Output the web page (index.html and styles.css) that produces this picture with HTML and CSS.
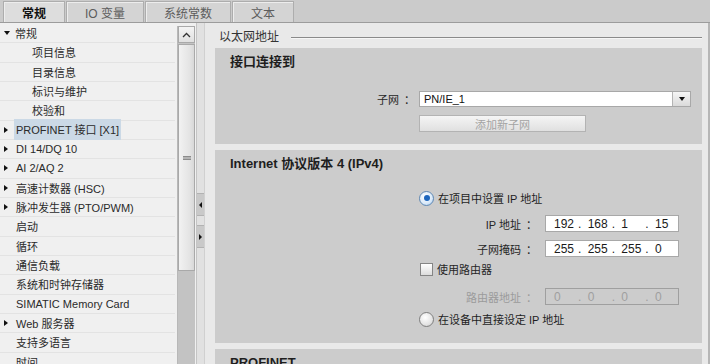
FILE: index.html
```html
<!DOCTYPE html>
<html lang="zh-CN">
<head>
  <meta charset="UTF-8" />
  <title>属性 - 常规</title>
  <link rel="stylesheet" href="styles.css">
</head>
<body>

  <!-- tab bar -->
  <div class="tabs">
    <div class="tab active">常规</div>
    <div class="tab">IO 变量</div>
    <div class="tab">系统常数</div>
    <div class="tab">文本</div>
  </div>

  <div class="main">

    <!-- navigation tree -->
    <ul class="tree">
      <li class="row kids"><span class="caret down"></span>常规</li>
      <li class="row child">项目信息</li>
      <li class="row child">目录信息</li>
      <li class="row child">标识与维护</li>
      <li class="row child">校验和</li>
      <li class="row kids"><span class="caret"></span><span class="sel">PROFINET 接口 [X1]</span></li>
      <li class="row kids"><span class="caret"></span>DI 14/DQ 10</li>
      <li class="row kids"><span class="caret"></span>AI 2/AQ 2</li>
      <li class="row kids"><span class="caret"></span>高速计数器 (HSC)</li>
      <li class="row kids"><span class="caret"></span>脉冲发生器 (PTO/PWM)</li>
      <li class="row">启动</li>
      <li class="row">循环</li>
      <li class="row">通信负载</li>
      <li class="row">系统和时钟存储器</li>
      <li class="row">SIMATIC Memory Card</li>
      <li class="row kids"><span class="caret"></span>Web 服务器</li>
      <li class="row">支持多语言</li>
      <li class="row">时间</li>
    </ul>

    <div class="vscroll">
      <div class="track">
        <div class="up">
          <svg width="9" height="6" viewBox="0 0 9 6"><path d="M1 5 L4.5 1.5 L8 5" fill="none" stroke="#333" stroke-width="1.3"/></svg>
        </div>
        <div class="thumb"><span class="grip"></span></div>
      </div>
    </div>

    <div class="splitter">
      <div class="sbtn first"><span class="tri-l"></span></div>
      <div class="sbtn"><span class="tri-r"></span></div>
    </div>

    <!-- property page -->
    <div class="content">
      <div class="heading"><span>以太网地址</span><span class="rule"></span></div>

      <section class="group">
        <h3>接口连接到</h3>
        <div class="subnet">
          <span class="lbl-wide">子网<span class="colon">：</span></span>
          <div class="select">
            <span class="val">PN/IE_1</span>
            <span class="arr"><span class="tri-d"></span></span>
          </div>
        </div>
        <button class="btn" disabled>添加新子网</button>
      </section>

      <section class="group tall">
        <h3>Internet 协议版本 4 (IPv4)</h3>
        <div class="opts">
          <div class="radio-row first">
            <span class="radio on"></span>在项目中设置 IP 地址
          </div>
          <div class="ip-row first">
            <span class="lbl">IP 地址<span class="colon">：</span></span>
            <div class="ipbox">
              <span class="oct">192</span><span class="dot">.</span>
              <span class="oct">168</span><span class="dot">.</span>
              <span class="oct">1</span><span class="dot">.</span>
              <span class="oct">15</span>
            </div>
          </div>
          <div class="ip-row">
            <span class="lbl">子网掩码<span class="colon">：</span></span>
            <div class="ipbox">
              <span class="oct">255</span><span class="dot">.</span>
              <span class="oct">255</span><span class="dot">.</span>
              <span class="oct">255</span><span class="dot">.</span>
              <span class="oct">0</span>
            </div>
          </div>
          <div class="check-row">
            <span class="check"></span>使用路由器
          </div>
          <div class="ip-row off router">
            <span class="lbl">路由器地址<span class="colon">：</span></span>
            <div class="ipbox">
              <span class="oct">0</span><span class="dot">.</span>
              <span class="oct">0</span><span class="dot">.</span>
              <span class="oct">0</span><span class="dot">.</span>
              <span class="oct">0</span>
            </div>
          </div>
          <div class="radio-row">
            <span class="radio"></span>在设备中直接设定 IP 地址
          </div>
        </div>
      </section>

      <section class="group">
        <h3>PROFINET</h3>
      </section>
    </div>

  </div>
</body>
</html>
```

FILE: styles.css
```css
* {
  margin: 0;
  padding: 0;
  box-sizing: border-box;
}

body {
  width: 710px;
  height: 364px;
  overflow: hidden;
  font-family: "Liberation Sans", "Noto Sans CJK SC", sans-serif;
  font-size: 11px;
  color: #262626;
  background: #e9e9e9;
}

/* Tabs */
.tabs {
  height: 23px;
  background: #cbcbcb;
  border-bottom: 1px solid #9c9c9c;
  display: flex;
  align-items: flex-end;
  gap: 1px;
  padding-left: 3px;
}

.tab {
  height: 21px;
  padding: 0 18px;
  display: flex;
  align-items: center;
  font-size: 12px;
  color: #5c5c5c;
  background: #d4d4d4;
  border: 1px solid #adadad;
  border-bottom: none;
  box-shadow: inset 1px 1px 0 #ededed;
}

.tab.active {
  color: #111;
  font-weight: bold;
  background: #dddddd;
}

.main {
  display: flex;
  height: 341px;
}

/* Tree */
.tree {
  list-style: none;
  width: 175px;
  background: #f0f0f0;
  padding-top: 1px;
  overflow: hidden;
}

.row {
  height: 19.33px;
  border-bottom: 1px solid #e3e3e3;
  display: flex;
  align-items: center;
  padding-left: 16px;
  white-space: nowrap;
  color: #2a2a2a;
}

.row.kids {
  padding-left: 4px;
}

.row.child {
  padding-left: 32px;
}

.caret {
  width: 0;
  height: 0;
  margin-right: 8px;
  border-left: 4px solid #111;
  border-top: 3.5px solid transparent;
  border-bottom: 3.5px solid transparent;
}

.caret.down {
  border-top: 4px solid #111;
  border-left: 3.5px solid transparent;
  border-right: 3.5px solid transparent;
  border-bottom: none;
  margin-right: 5px;
}

.sel {
  background: #cbd9e6;
  padding: 2px 2px 3px 2px;
  margin-left: -2px;
}

/* Scrollbar */
.vscroll {
  width: 21px;
  padding: 3px 1px 0 2px;
  background: #f0f0f0;
}

.track {
  height: 100%;
  background: #c3c3c3;
  border-left: 1px solid #b8b8b8;
}

.up {
  height: 17px;
  background: linear-gradient(#f4f4f4, #e0e0e0);
  border: 1px solid #a9a9a9;
  display: flex;
  align-items: center;
  justify-content: center;
}

.thumb {
  height: 227px;
  margin-top: 1px;
  background: linear-gradient(90deg, #f2f2f2, #e4e4e4 70%, #d8d8d8);
  border: 1px solid #a9a9a9;
  display: flex;
  align-items: center;
  justify-content: center;
}

.grip {
  width: 8px;
  height: 4px;
  border-top: 1px solid #8c8c8c;
  border-bottom: 1px solid #8c8c8c;
  background: #b4b4b4;
}

/* Splitter */
.splitter {
  width: 9px;
  background: #e1e1e1;
  border-left: 1px solid #c4c4c4;
  border-right: 1px solid #d0d0d0;
}

.sbtn {
  height: 23px;
  margin-top: 9px;
  background: #c9c9c9;
  border-top: 1px solid #b2b2b2;
  border-bottom: 1px solid #b2b2b2;
  display: flex;
  align-items: center;
  justify-content: center;
}

.sbtn.first {
  margin-top: 170px;
}

.tri-l,
.tri-r {
  width: 0;
  height: 0;
  border-top: 3px solid transparent;
  border-bottom: 3px solid transparent;
}

.tri-l {
  border-right: 3px solid #111;
}

.tri-r {
  border-left: 3px solid #111;
}

/* Content */
.content {
  flex: 1;
  padding: 0 6px 0 10px;
  border-right: 2px solid #b6b6b6;
  overflow: hidden;
}

.heading {
  height: 25px;
  display: flex;
  align-items: center;
  padding-left: 4px;
  font-size: 12px;
  color: #333;
}

.rule {
  flex: 1;
  margin: 5px 0 0 12px;
  border-top: 1px solid #8a8a8a;
  border-bottom: 1px solid #f6f6f6;
}

.group {
  background: #cccccc;
  margin-bottom: 6px;
  padding: 6px 0 12px 15px;
}

.group.tall {
  padding-bottom: 16px;
}

h3 {
  font-size: 13px;
  line-height: 16px;
  font-weight: bold;
  color: #1e1e1e;
}

.subnet {
  display: flex;
  align-items: center;
  margin-top: 21px;
}

.lbl-wide {
  width: 189px;
  text-align: right;
  padding-right: 4px;
}

.colon {
  padding-left: 5px;
}

.select {
  width: 272px;
  height: 16px;
  background: #fff;
  border: 1px solid #a8a8a8;
  display: flex;
}

.select .val {
  flex: 1;
  padding-left: 4px;
  line-height: 14px;
  color: #111;
}

.arr {
  width: 18px;
  border-left: 1px solid #b4b4b4;
  background: linear-gradient(#f6f6f6, #dadada);
  display: flex;
  align-items: center;
  justify-content: center;
}

.tri-d {
  width: 0;
  height: 0;
  border-top: 4px solid #111;
  border-left: 3.5px solid transparent;
  border-right: 3.5px solid transparent;
}

.btn {
  display: block;
  margin: 8px 0 0 189px;
  width: 167px;
  height: 17px;
  font: inherit;
  color: #a3a3a3;
  background: linear-gradient(#f5f5f5, #e0e0e0);
  border: 1px solid #b3b3b3;
}

/* IPv4 options */
.opts {
  padding-left: 189px;
}

.radio-row {
  height: 16px;
  display: flex;
  align-items: center;
  gap: 4px;
  margin-top: 6px;
  color: #1e1e1e;
}

.radio-row.first {
  margin-top: 18px;
}

.radio {
  width: 15px;
  height: 15px;
  border-radius: 50%;
  border: 1px solid #7f7f7f;
  background: radial-gradient(circle at 40% 35%, #ffffff, #e4e4e4 60%, #c8c8c8);
  display: flex;
  align-items: center;
  justify-content: center;
}

.radio.on {
  border-color: #5f88b4;
  background: radial-gradient(circle at 40% 35%, #ffffff, #d9e9f9 60%, #9fc3e8);
}

.radio.on::after {
  content: "";
  width: 6px;
  height: 6px;
  border-radius: 50%;
  background: #1d66bd;
}

.ip-row {
  display: flex;
  align-items: center;
  margin-top: 8px;
}

.ip-row.first {
  margin-top: 9px;
}

.ip-row.router {
  margin-top: 12px;
}

.lbl {
  width: 118px;
  text-align: right;
}

.ipbox {
  width: 134px;
  height: 17px;
  margin-left: 8px;
  padding-left: 8px;
  background: #fff;
  border: 1px solid #a8a8a8;
  display: flex;
  align-items: center;
  font-size: 12px;
  color: #1a1a1a;
}

.oct {
  width: 24px;
}

.dot {
  width: 11px;
  padding-left: 1px;
}

.ip-row.off {
  color: #9b9b9b;
}

.ip-row.off .ipbox {
  background: #cccccc;
  border-color: #9f9f9f;
  color: #9f9f9f;
}

.check-row {
  height: 14px;
  display: flex;
  align-items: center;
  gap: 4px;
  margin-top: 5px;
  padding-left: 1px;
}

.check {
  width: 13px;
  height: 13px;
  border: 1px solid #858585;
  background: linear-gradient(#ffffff, #dcdcdc);
}
```
